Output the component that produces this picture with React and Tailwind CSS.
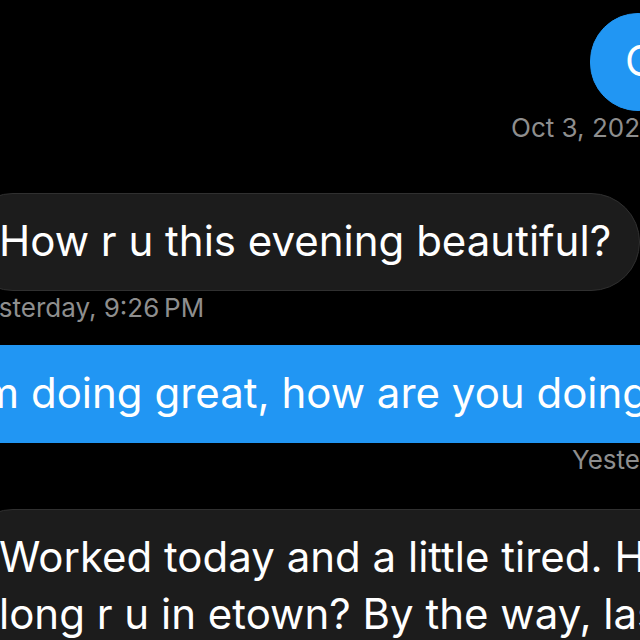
import clsx from 'clsx'

const messages = [
  { id: 1, mine: true, lines: ['O'], time: 'Oct 3, 202', spacing: 'mb-12' },
  { id: 2, mine: false, lines: ['How r u this evening beautiful?'], time: 'Yesterday, 9:26\u202fPM', spacing: 'mb-5' },
  { id: 3, mine: true, wide: true, lines: ['I’m doing great, how are you doing?'], time: 'Yeste', spacing: 'mb-8' },
  { id: 4, mine: false, wide: true, lines: ['Worked today and a little tired. H', 'long r u in etown? By the way, las'] },
]

const Message = ({ message }) => {
  const { mine, wide, lines, time, spacing } = message

  return (
    <li className={clsx('flex flex-col', mine ? 'items-end' : 'items-start', spacing)}>
      <div
        className={clsx(
          'rounded-[49px] border pt-[18px] pr-7 pb-[21px] pl-[34px] text-[42px] leading-[57px] whitespace-nowrap text-white',
          mine ? 'border-[#2196f3] bg-[#2196f3]' : 'border-[#303030] bg-[#1c1c1c]',
          mine && !wide && '-mr-2.5',
          mine && wide && '-mx-[38px] self-stretch',
          !mine && wide && '-mr-10 self-stretch'
        )}
      >
        {lines.map((line) => (
          <p key={line}>{line}</p>
        ))}
      </div>
      {time && (
        <time
          className={clsx(
            'text-[26px] leading-[34px] whitespace-nowrap text-[#8e8e8e]',
            mine ? 'pr-9' : 'pl-1'
          )}
        >
          {time}
        </time>
      )}
    </li>
  )
}

const App = () => {
  return (
    <main className="h-screen overflow-hidden bg-black pt-[13px] font-['Inter',sans-serif]">
      <ol className="-mx-9 flex flex-col">
        {messages.map((message) => (
          <Message key={message.id} message={message} />
        ))}
      </ol>
    </main>
  )
}

export default App
